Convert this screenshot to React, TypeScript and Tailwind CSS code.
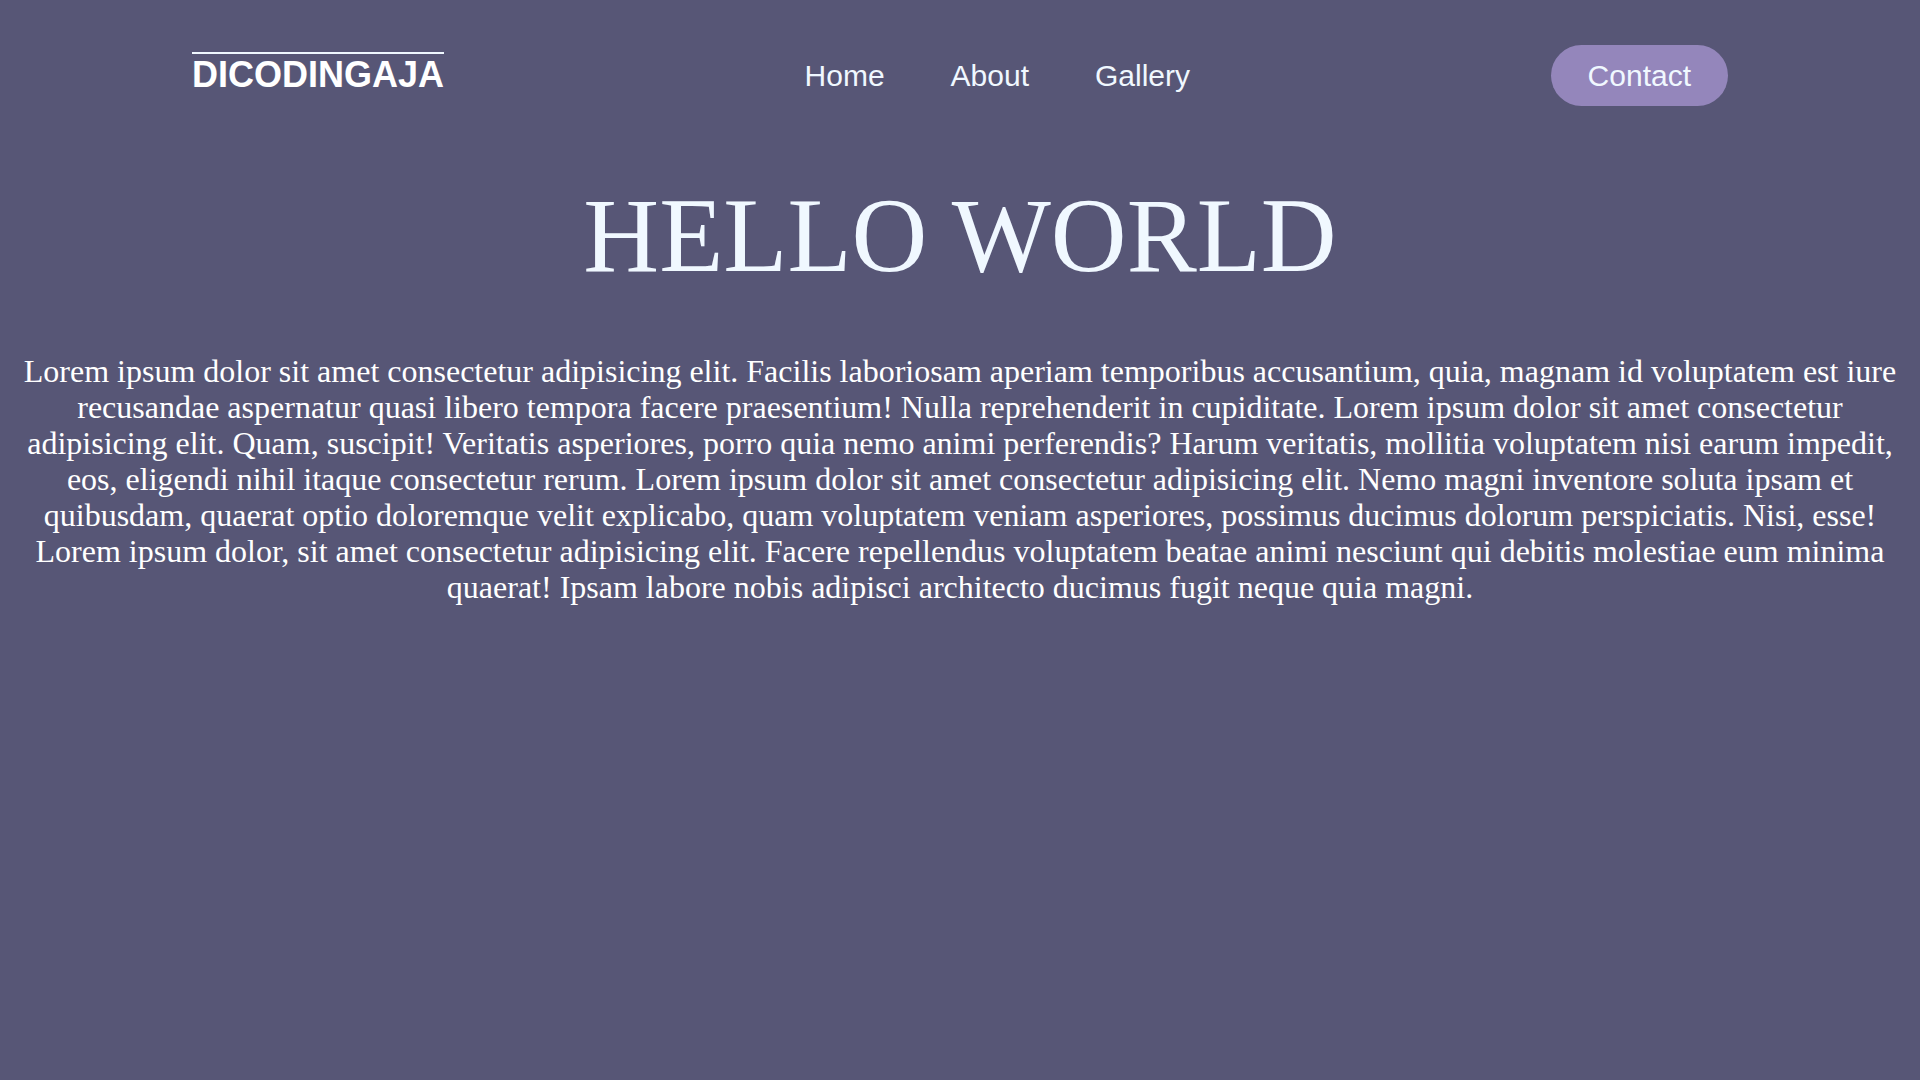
import React from "react";

export default function App() {
  return (
    <div className="min-h-screen w-full bg-[#575676] text-[#f0f8ff]">
      <nav className="flex items-center justify-between px-[192px] pt-[45px]" style={{ fontFamily: '"Liberation Sans", Arial, sans-serif' }}>
        <div className="mb-[4px] border-t-2 border-[#f0f8ff] text-[36px] font-bold leading-[41px] text-white">
          DICODINGAJA
        </div>
        <ul className="flex items-center gap-[66px] text-[30px] leading-[35px]">
          <li>Home</li>
          <li>About</li>
          <li>Gallery</li>
        </ul>
        <button className="rounded-full bg-[#9486bb] px-[37px] py-[13px] text-[30px] leading-[35px] text-[#f0f8ff]">
          Contact
        </button>
      </nav>
      <h1
        className="mt-[72px] text-center text-[105px] font-normal leading-[116px]"
        style={{ fontFamily: '"Liberation Serif", "Times New Roman", serif' }}
      >
        HELLO WORLD
      </h1>
      <p
        className="mt-[59px] px-[4px] text-center text-[32px] leading-[36px] text-white"
        style={{ fontFamily: '"Liberation Serif", "Times New Roman", serif' }}
      >
        Lorem ipsum dolor sit amet consectetur adipisicing elit. Facilis laboriosam aperiam temporibus accusantium, quia, magnam id voluptatem est iure recusandae aspernatur quasi libero tempora facere praesentium! Nulla reprehenderit in cupiditate. Lorem ipsum dolor sit amet consectetur adipisicing elit. Quam, suscipit! Veritatis asperiores, porro quia nemo animi perferendis? Harum veritatis, mollitia voluptatem nisi earum impedit, eos, eligendi nihil itaque consectetur rerum. Lorem ipsum dolor sit amet consectetur adipisicing elit. Nemo magni inventore soluta ipsam et quibusdam, quaerat optio doloremque velit explicabo, quam voluptatem veniam asperiores, possimus ducimus dolorum perspiciatis. Nisi, esse! Lorem ipsum dolor, sit amet consectetur adipisicing elit. Facere repellendus voluptatem beatae animi nesciunt qui debitis molestiae eum minima quaerat! Ipsam labore nobis adipisci architecto ducimus fugit neque quia magni.
      </p>
    </div>
  );
}
